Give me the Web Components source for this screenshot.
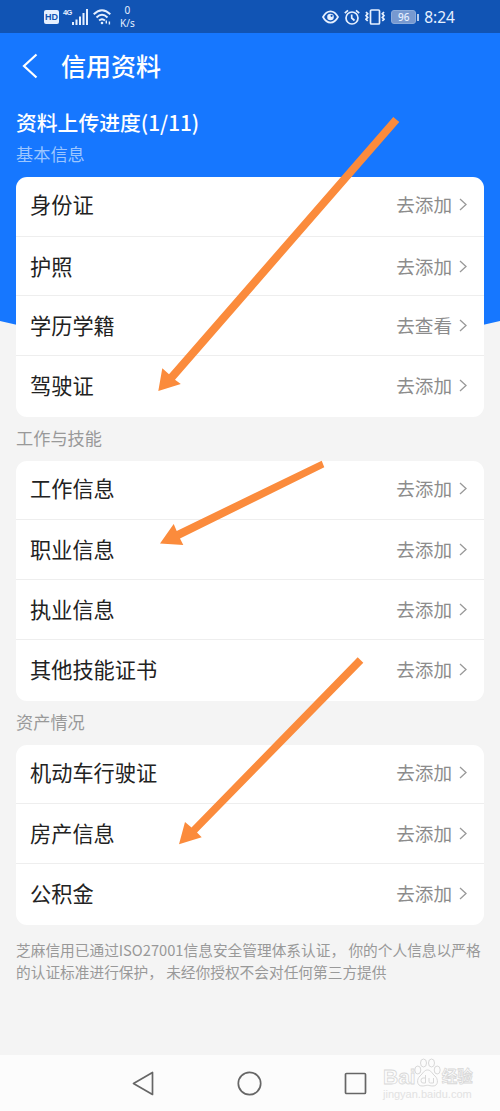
<!DOCTYPE html>
<html lang="zh-CN">
<head>
<meta charset="UTF-8">
<meta name="viewport" content="width=device-width, initial-scale=1">
<title>信用资料</title>
<style>
  body {
    margin: 0;
    background: #f4f4f4;
    font-family: "Noto Sans CJK SC", "Noto Sans", sans-serif;
  }
</style>
</head>
<body>
<credit-page>
  <status-bar slot="top" time="8:24" battery="96" speed="0"></status-bar>
  <page-header slot="top" progress="资料上传进度(1/11)">信用资料</page-header>

  <info-group label="基本信息" light>
    <info-row action="去添加">身份证</info-row>
    <info-row action="去添加">护照</info-row>
    <info-row action="去查看">学历学籍</info-row>
    <info-row action="去添加">驾驶证</info-row>
  </info-group>
  <info-group label="工作与技能">
    <info-row action="去添加">工作信息</info-row>
    <info-row action="去添加">职业信息</info-row>
    <info-row action="去添加">执业信息</info-row>
    <info-row action="去添加">其他技能证书</info-row>
  </info-group>
  <info-group label="资产情况">
    <info-row action="去添加">机动车行驶证</info-row>
    <info-row action="去添加">房产信息</info-row>
    <info-row action="去添加">公积金</info-row>
  </info-group>

  <foot-note>芝麻信用已通过ISO27001信息安全管理体系认证， 你的个人信息以严格<br>的认证标准进行保护， 未经你授权不会对任何第三方提供</foot-note>
  <nav-bar slot="bottom"></nav-bar>
  <pointer-arrows slot="overlay"></pointer-arrows>
</credit-page>

<script>
class CreditPage extends HTMLElement {
  constructor() {
    super();
    this.attachShadow({ mode: "open" }).innerHTML = `
      <style>
        :host {
          display: flex;
          flex-direction: column;
          position: relative;
          height: 1111px;
          overflow: hidden;
        }
        .backdrop {
          position: absolute;
          top: 0;
          left: 0;
          width: 500px;
          height: 360px;
        }
        .top, main, .bottom {
          position: relative;
        }
        main {
          flex: 1;
          padding: 0 16px;
        }
      </style>
      <svg class="backdrop" viewBox="0 0 500 360">
        <path d="M0 0H500V321Q250 382 0 321Z" fill="#1677ff"/>
      </svg>
      <div class="top"><slot name="top"></slot></div>
      <main><slot></slot></main>
      <div class="bottom"><slot name="bottom"></slot></div>
      <slot name="overlay"></slot>
    `;
  }
}

class StatusBar extends HTMLElement {
  connectedCallback() {
    this.attachShadow({ mode: "open" });
    this.shadowRoot.innerHTML = `
      <style>
        :host {
          display: flex;
          justify-content: space-between;
          align-items: center;
          box-sizing: border-box;
          height: 33px;
          padding: 1px 45px 0 44px;
          background: #1154b4;
          color: #e6f0ff;
          font-family: "Noto Sans", sans-serif;
        }
        .side {
          display: flex;
          align-items: center;
        }
        svg {
          display: block;
        }
        .hd {
          width: 15px;
          height: 14px;
          border-radius: 2px;
          background: #e6f0ff;
          color: #1154b4;
          font: 700 9px/14px "Liberation Sans", sans-serif;
          text-align: center;
        }
        .net {
          align-self: flex-start;
          margin: 5px 0 0 4px;
          font: 700 7.5px/8px "Liberation Sans", sans-serif;
          letter-spacing: -.6px;
          width: 9px;
        }
        .speed {
          margin-left: 8px;
          font-size: 10px;
          line-height: 13px;
          text-align: center;
        }
        .battery {
          box-sizing: border-box;
          width: 25px;
          height: 14px;
          margin-left: 6px;
          border: 1px solid #8aabdb;
          border-radius: 3px;
          background: #7799d0;
          font-size: 10px;
          font-weight: 500;
          line-height: 12px;
          text-align: center;
        }
        .cap {
          width: 2px;
          height: 7px;
          margin-left: 1px;
          background: #b4cbed;
        }
        .time {
          margin-left: 5px;
          font-size: 15.5px;
          line-height: 20px;
        }
      </style>
      <div class="side">
        <div class="hd">HD</div>
        <div class="net">4G</div>
        <svg width="16" height="16" viewBox="0 0 16 16" fill="#e6f0ff">
          <path d="M0 13h2v3H0zM3.5 10.500h2V16h-2zM7 7.500h2V16H7zM10.500 4h2v12h-2zM14 0h2v16h-2z"/>
        </svg>
        <svg style="margin-left:5px" width="19" height="16" viewBox="0 0 19 16" fill="none" stroke="#e6f0ff" stroke-width="1.900">
          <path d="M.7 5.200Q9 -2.800 17.300 5.200M3.500 8.500Q9 3.200 14.500 8.500M6.100 11.500Q9 8.800 11.900 11.500"/>
          <circle cx="9" cy="14" r="1.300" fill="#e6f0ff" stroke="none"/>
          <path d="M13.300 11.500v3M16.400 12.500v3" stroke-width="1.400"/>
        </svg>
        <div class="speed">${this.getAttribute("speed")}<br>K/s</div>
      </div>
      <div class="side">
        <svg width="17" height="14" viewBox="0 0 17 14" fill="none" stroke="#e6f0ff" stroke-width="1.700">
          <path d="M1 7Q4 1.400 8.500 1.400T16 7Q13 12.600 8.500 12.600T1 7Z"/>
          <circle cx="8.500" cy="7" r="3.300" fill="#e6f0ff" stroke="none"/>
          <circle cx="9.600" cy="5.800" r="1.100" fill="#1154b4" stroke="none"/>
        </svg>
        <svg style="margin-left:5px" width="16" height="17" viewBox="0 0 16 17" fill="none" stroke="#e6f0ff" stroke-width="1.700">
          <circle cx="8" cy="9" r="6"/>
          <path d="M.8 4.200 4 1.300M15.200 4.200 12 1.300M7.700 5.500V9l2.800 2.500"/>
        </svg>
        <svg style="margin-left:5px" width="20" height="16" viewBox="0 0 20 16" fill="none" stroke="#e6f0ff" stroke-width="1.700">
          <rect x="5.500" y="1" width="9" height="14" rx="1"/>
          <path d="M1 3l1.700 1.800L1 6.600l1.700 1.800L1 10.200l1.700 1.800M19 3l-1.700 1.800L19 6.600l-1.700 1.800 1.700 1.800-1.700 1.800"/>
        </svg>
        <div class="battery">${this.getAttribute("battery")}</div>
        <div class="cap"></div>
        <div class="time">${this.getAttribute("time")}</div>
      </div>
    `;
  }
}

class PageHeader extends HTMLElement {
  connectedCallback() {
    this.attachShadow({ mode: "open" });
    this.shadowRoot.innerHTML = `
      <style>
        :host {
          display: block;
          height: 108px;
          color: #fff;
        }
        .bar {
          display: flex;
          align-items: center;
          height: 66px;
          padding-left: 22px;
        }
        h1 {
          margin: 0 0 3px 23px;
          font-size: 25px;
          font-weight: 500;
          line-height: 36px;
        }
        .progress {
          padding: 7px 0 0 16px;
          font-size: 20.800px;
          font-weight: 500;
          line-height: 32px;
        }
      </style>
      <div class="bar">
        <svg width="16" height="26" viewBox="0 0 16 26" fill="none" stroke="#fff" stroke-width="2.200">
          <path d="M14.500 1.500 2 13l12.500 11.500"/>
        </svg>
        <h1><slot></slot></h1>
      </div>
      <div class="progress">${this.getAttribute("progress")}</div>
    `;
  }
}

class InfoGroup extends HTMLElement {
  connectedCallback() {
    this.attachShadow({ mode: "open" });
    this.shadowRoot.innerHTML = `
      <style>
        :host {
          display: block;
        }
        .label {
          height: 44px;
          color: #999;
          font-size: 17.200px;
          line-height: 41px;
        }
        :host([light]) .label {
          height: 36px;
          color: #9cc6ff;
          line-height: 26px;
        }
        .card {
          overflow: hidden;
          border-radius: 11px;
          background: #fff;
        }
      </style>
      <div class="label">${this.getAttribute("label")}</div>
      <div class="card"><slot></slot></div>
    `;
  }
}

class InfoRow extends HTMLElement {
  connectedCallback() {
    this.attachShadow({ mode: "open" });
    this.shadowRoot.innerHTML = `
      <style>
        :host {
          display: flex;
          align-items: center;
          box-sizing: border-box;
          height: 59.700px;
          padding: 0 17px 0 14px;
          border-bottom: 1.500px solid #eee;
          color: #222;
          font-size: 21.200px;
        }
        :host(:first-child) {
          padding-bottom: 3px;
        }
        :host(:last-child) {
          height: 60.700px;
          padding-bottom: 1px;
          border-bottom: none;
        }
        .name {
          flex: 1;
        }
        .name, .action {
          padding-bottom: 2px;
        }
        .action {
          margin-right: 7px;
          color: #8c8c8c;
          font-size: 18.600px;
        }
      </style>
      <span class="name"><slot></slot></span>
      <span class="action">${this.getAttribute("action")}</span>
      <svg width="8" height="13" viewBox="0 0 8 13" fill="none" stroke="#999" stroke-width="1.300">
        <path d="M1 1l6 5.500L1 12"/>
      </svg>
    `;
  }
}

class FootNote extends HTMLElement {
  constructor() {
    super();
    this.attachShadow({ mode: "open" }).innerHTML = `
      <style>
        :host {
          display: block;
          padding-top: 14px;
          color: #999;
          font-size: 14.700px;
          line-height: 22px;
          white-space: nowrap;
        }
      </style>
      <slot></slot>
    `;
  }
}

class NavBar extends HTMLElement {
  constructor() {
    super();
    this.attachShadow({ mode: "open" }).innerHTML = `
      <style>
        :host {
          display: flex;
          justify-content: space-between;
          align-items: center;
          position: relative;
          box-sizing: border-box;
          height: 56px;
          padding: 0 133px 0 132px;
          background: #fcfcfc;
        }
        .mark {
          position: absolute;
          left: 383px;
          top: 0;
          color: #fcfcfc;
          font-family: "Liberation Sans", "Noto Sans CJK SC", sans-serif;
          -webkit-text-stroke: .8px #d8d8d8;
        }
        .brand {
          display: flex;
          align-items: center;
          height: 28px;
          padding-top: 8px;
          font-size: 21px;
          font-weight: 700;
          line-height: 28px;
        }
        .brand svg {
          margin: -9px 1px 0 -2px;
        }
        .brand .cn {
          font-size: 15.500px;
        }
        .url {
          margin-top: -4px;
          color: #e2e2e2;
          font-size: 11px;
          line-height: 14px;
          -webkit-text-stroke: 0;
        }
      </style>
      <svg width="22" height="25" viewBox="0 0 22 25" fill="none" stroke="#666" stroke-width="1.700" stroke-linejoin="round">
        <path d="M20.500 1.500v22L1.500 12.500Z"/>
      </svg>
      <svg width="25" height="25" viewBox="0 0 25 25" fill="none" stroke="#666" stroke-width="1.700">
        <circle cx="12.500" cy="12.500" r="11.200"/>
      </svg>
      <svg width="23" height="23" viewBox="0 0 23 23" fill="none" stroke="#666" stroke-width="1.700">
        <rect x="1.500" y="1.500" width="20" height="20" rx="1"/>
      </svg>
      <div class="mark">
        <div class="brand">
          <span>Bai</span>
          <svg width="27" height="30" viewBox="0 0 27 30" fill="#fcfcfc" stroke="#d8d8d8" stroke-width="1">
            <ellipse cx="3.800" cy="12" rx="3" ry="4"/>
            <ellipse cx="9.500" cy="5" rx="3" ry="4"/>
            <ellipse cx="17.500" cy="5" rx="3" ry="4"/>
            <ellipse cx="23.200" cy="12" rx="3" ry="4"/>
            <path d="M13.500 12c3.500 0 4.500 3.500 7.500 6 3.500 3 3.500 10-2 10-3 0-3.500-.7-5.500-.7s-2.500.7-5.500.7c-5.500 0-5.500-7-2-10 3-2.500 4-6 7.500-6Z"/>
            <path d="M11.500 17v8M11.500 20H9q-2 0-2 2.500T9 25h2.500M15 20v3.500q0 1.500 1.500 1.500h3v-5" fill="none"/>
          </svg>
          <span class="cn">经验</span>
        </div>
        <div class="url">jingyan.baidu.com</div>
      </div>
    `;
  }
}

// Orange hint arrows laid over the whole page
class PointerArrows extends HTMLElement {
  constructor() {
    super();
    this.attachShadow({ mode: "open" }).innerHTML = `
      <style>
        :host {
          display: block;
          position: absolute;
          top: 0;
          left: 0;
          pointer-events: none;
        }
        svg {
          display: block;
        }
      </style>
      <svg width="500" height="1111" viewBox="0 0 500 1111" fill="#fb8b3c">
        <polygon points="158.300,391 162.300,368.300 169,374.300 393.300,117 399.300,122 175,379.700 180.800,384"/>
        <polygon points="160,543.500 173.700,524 176.700,531 321.700,460.700 324.300,467.300 180,538.500 183.300,545"/>
        <polygon points="179,844.300 185,822 191.500,827.500 357.700,657.300 363.300,662.700 197,832.500 201.700,837.300"/>
      </svg>
    `;
  }
}

customElements.define("credit-page", CreditPage);
customElements.define("status-bar", StatusBar);
customElements.define("page-header", PageHeader);
customElements.define("info-group", InfoGroup);
customElements.define("info-row", InfoRow);
customElements.define("foot-note", FootNote);
customElements.define("nav-bar", NavBar);
customElements.define("pointer-arrows", PointerArrows);
</script>
</body>
</html>
